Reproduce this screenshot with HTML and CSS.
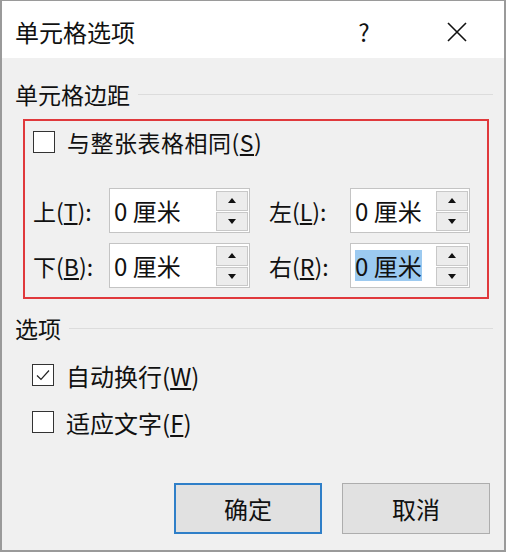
FILE: index.html
```html
<!DOCTYPE html>
<html lang="zh-CN">
<head>
    <meta charset="UTF-8">
    <title>单元格选项</title>
    <link rel="stylesheet" href="styles.css">
</head>
<body>
    <div class="dialog">
        <div class="titlebar">
            <span class="title">单元格选项</span>
            <span class="help">?</span>
            <span class="close">
                <svg width="20" height="20" viewBox="0 0 20 20"><path d="M1 1 L19 19 M19 1 L1 19" stroke="#111" stroke-width="1.6" fill="none"/></svg>
            </span>
        </div>
        <div class="content">
            <div class="group-header"><span>单元格边距</span></div>
            <div class="margins-box">
                <div class="check-row">
                    <span class="checkbox"></span>
                    <span class="check-label wide">与整张表格相同(<u>S</u>)</span>
                </div>
                <div class="field-grid">
                    <span class="field-label">上(<u>T</u>):</span>
                    <div class="spin-input">
                        <span class="value">0 厘米</span>
                        <div class="spinner"><span class="spin up"></span><span class="spin down"></span></div>
                    </div>
                    <span class="field-label">左(<u>L</u>):</span>
                    <div class="spin-input">
                        <span class="value">0 厘米</span>
                        <div class="spinner"><span class="spin up"></span><span class="spin down"></span></div>
                    </div>
                    <span class="field-label">下(<u>B</u>):</span>
                    <div class="spin-input">
                        <span class="value">0 厘米</span>
                        <div class="spinner"><span class="spin up"></span><span class="spin down"></span></div>
                    </div>
                    <span class="field-label">右(<u>R</u>):</span>
                    <div class="spin-input">
                        <span class="value selected">0 厘米</span>
                        <div class="spinner"><span class="spin up"></span><span class="spin down"></span></div>
                    </div>
                </div>
            </div>
            <div class="group-header options"><span>选项</span></div>
            <div class="check-row option first">
                <span class="checkbox checked">
                    <svg width="16" height="16" viewBox="0 0 16 16"><path d="M2 8.5 L6 12.5 L14 3.5" stroke="#222" stroke-width="1.2" fill="none"/></svg>
                </span>
                <span class="check-label">自动换行(<u>W</u>)</span>
            </div>
            <div class="check-row option">
                <span class="checkbox"></span>
                <span class="check-label">适应文字(<u>F</u>)</span>
            </div>
            <div class="buttons">
                <button class="btn default">确定</button>
                <button class="btn">取消</button>
            </div>
        </div>
    </div>
</body>
</html>
```

FILE: styles.css
```css
body {
    margin: 0;
    background-color: #fff;
    font-family: "Noto Sans CJK SC", "Noto Sans", sans-serif;
    color: #111;
}
.dialog {
    width: 502px;
    height: 549px;
    border: 2px solid #9a9a9a;
    border-top-width: 1px;
    display: flex;
    flex-direction: column;
}
.titlebar {
    height: 57px;
    background-color: #fff;
    display: flex;
    align-items: center;
    padding-left: 13px;
    padding-top: 4px;
    box-sizing: border-box;
    font-size: 24px;
}
.title {
    flex: 1;
}
.help {
    width: 24px;
    text-align: center;
    font-size: 24px;
    margin-right: 71px;
}
.close {
    width: 20px;
    height: 20px;
    margin-right: 37px;
    display: flex;
}
.content {
    flex: 1;
    background-color: #f0f0f0;
    padding: 0 11px 0 13px;
}
.group-header {
    height: 30px;
    margin-top: 21px;
    display: flex;
    align-items: center;
    font-size: 23px;
}
.group-header::after {
    content: "";
    flex: 1;
    height: 1px;
    margin-left: 8px;
    background-color: #dcdcdc;
}
.group-header.options {
    margin-top: 14px;
}
.margins-box {
    margin: 10px 0 0 8px;
    width: 466px;
    height: 180px;
    border: 2px solid #e0393c;
    padding: 0 0 0 8px;
    box-sizing: border-box;
}
.check-row {
    height: 42px;
    display: flex;
    align-items: center;
}
.checkbox {
    width: 20px;
    height: 20px;
    border: 1px solid #333;
    background-color: #fff;
    display: flex;
    align-items: center;
    justify-content: center;
    flex-shrink: 0;
}
.check-label {
    margin-left: 12px;
    font-size: 24px;
}
.check-label.wide {
    font-size: 23px;
    letter-spacing: 0.5px;
}
.check-row.option {
    height: 34px;
    margin-top: 13px;
    margin-left: 17px;
}
.check-row.option.first {
    margin-top: 15px;
}
.field-grid {
    margin-top: 25px;
    display: grid;
    grid-template-columns: 76px 141px 81px 139px;
    grid-template-rows: 45px 45px;
    row-gap: 10px;
    column-gap: 0;
}
.field-label {
    font-size: 23px;
    display: flex;
    align-items: center;
}
.field-label:nth-child(3),
.field-label:nth-child(7) {
    padding-left: 19px;
}
.spin-input {
    background-color: #fff;
    border: 1px solid #c4c4c4;
    display: flex;
    align-items: center;
    padding-left: 4px;
    font-size: 24px;
}
.field-grid .spin-input:nth-child(4),
.field-grid .spin-input:nth-child(8) {
    margin-left: 19px;
}
.value {
    flex: 1;
}
.value.selected {
    flex: none;
    background-color: #9ccaf0;
    line-height: 31px;
    margin-right: auto;
}
.spinner {
    width: 32px;
    align-self: stretch;
    margin: 2px 1px 1px 0;
    display: flex;
    flex-direction: column;
    gap: 1px;
}
.spin {
    flex: 1;
    background-color: #ececec;
    border: 1px solid #c8c8c8;
    position: relative;
}
.spin::before {
    content: "";
    position: absolute;
    left: 50%;
    top: 50%;
    margin-left: -4px;
    border-left: 4px solid transparent;
    border-right: 4px solid transparent;
}
.spin.up::before {
    margin-top: -3px;
    border-bottom: 5px solid #111;
}
.spin.down::before {
    margin-top: -2px;
    border-top: 5px solid #111;
}
.buttons {
    margin-top: 44px;
    display: flex;
    justify-content: flex-end;
    gap: 20px;
    padding-right: 3px;
}
.btn {
    width: 148px;
    height: 51px;
    background-color: #e1e1e1;
    border: 1px solid #adadad;
    font-family: inherit;
    font-size: 24px;
    color: #111;
}
.btn.default {
    border: 2px solid #2f7fc8;
}
```
